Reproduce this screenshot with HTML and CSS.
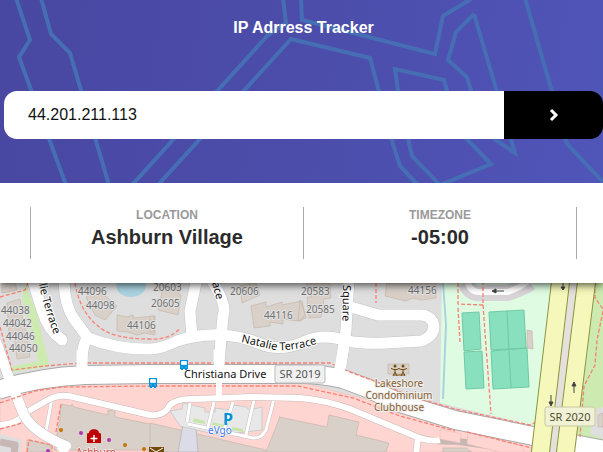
FILE: index.html
```html
<!DOCTYPE html>
<html lang="en">
<head>
<meta charset="utf-8">
<meta name="viewport" content="width=device-width, initial-scale=1">
<title>IP Adrress Tracker</title>
<link rel="stylesheet" href="styles.css">
</head>
<body>
<header class="hero">
  <svg class="hero-pattern" viewBox="0 0 603 183" preserveAspectRatio="xMidYMid slice" aria-hidden="true">
    <path d="M16-2 30 40 19 57 66 185M41-2 51 34 70 53 109 185M283-2 286 23 268 35 132 185M301-2 302 20 435 54 443 16 471-1M158 185 291 39 370 58 393 144 400 166 418 185M525-2 567 144 604 183M474 14 456 32 448 60 467 77 472 94M474 14 515 153 490 136M400 105 395 69 444 80 458 130 491 164 440 185 412 156 406 130"/>
  </svg>
  <h1 class="title">IP Adrress Tracker</h1>
  <form class="search">
    <input class="search-input" type="text" value="44.201.211.113" aria-label="IP address">
    <button class="search-button" type="button" aria-label="Search">
      <svg width="10" height="14" viewBox="0 0 10 14" aria-hidden="true"><path d="M2 2 7 7 2 12"/></svg>
    </button>
  </form>
</header>
<main class="content">
  <section class="info">
    <div class="info-edge"></div>
    <div class="info-item"><h2 class="info-label">LOCATION</h2><p class="info-value">Ashburn Village</p></div>
    <div class="info-item"><h2 class="info-label">TIMEZONE</h2><p class="info-value">-05:00</p></div>
    <div class="info-item"></div>
  </section>
  <svg class="map" viewBox="0 283 603 169" preserveAspectRatio="xMinYMin slice" role="img" aria-label="Map of Ashburn Village">
    <defs>
      <path id="natalie" d="M241 342Q258 346 275 350Q296 351 319 343"/>
      <path id="terrace" d="M39 284Q44 310 58 345"/>
      <g id="bus"><path class="bus" d="M0 0h8v9H7v1H5V9H3v1H1V9H0z"/><path class="bus-window" d="M1.500 1.500h5v3h-5zM1.500 7h1M5.500 7h1"/></g>
    </defs>
    <rect class="land" y="283" width="603" height="169"/>
    <path class="retail" d="M0 398 50 384 150 380 300 382 400 408 545 440V452H0z"/>
    <path class="residential" d="M0 434 22 440 20 452H0z"/>
    <path class="grass" d="M24 283 36 310 49 364 45 367 12 372 10 367 38 361 22 300z"/>
    <path class="park" d="M442 283H560L545 427 530 425 440 403z"/>
    <path class="stream" d="M443 283 446 325 443 399"/>
    <path class="grass" d="M590 283h13V446l-28-8z"/>
    <path class="residential" d="M593 410 603 407V439L590 434z"/>

    <g class="building">
      <path d="M2 283h13l2 7-15 3zM7 303l13-4 2 17 5 18 3 23-13 2-3-24-5-2z"/>
      <path d="M86 297l11-8 20 17-12 14-10-5zM117 315l10 2 6-2v3l22-2v19l-10-2-8 2-9-3-11-1z"/>
      <path d="M162 283h17l-1 10 3 2-3 20-20-5 4-18zM150 316h4v16h-4zM240 286l16-3 4 12-18 8z"/>
      <path d="M251 306l15-4v5l16-5v3l20-4 4 17-9 3-14-2v5l-13-2v4l-16 2zM300 300l5 14-4 7h-3zM306 283h24l1 15-7 1-3 18-12 1-2-21h5z"/>
      <path d="M387 283h49v15l-14 2-9-2-7 3-21-5zM527 330l5 1 1 18-6-1zM598 415l5-2v14h-5z"/>
      <path d="M388 364h21v10h-21zM279 417l48 10 2-12 30 7-3 13 33 8-3 9H266l14-35zM61 404l10 2 1-2 2 3 34 8v-5l7 1v6l40 8 22 8v17H54l6-31zM27 440l24 5v7H27z"/>
      <path d="M150 423l116 27v2H150zM443 448h23l6 4h-29z"/>
    </g>
    <path class="service-area" d="M183 424l13 3 2 25h-20z"/>
    <path class="parking" d="M170 411l12-2 1-6 22 5v4h10v-4l15 2 3-5 13 2 4 3 12-3v23l-44 5-38-9z"/>
    <path class="shrub" d="M194 418l11 3v3l-12-2zM213 422l11 3v3l-12-3zM233 427l10 2v3l-12-2z"/>

    <g class="court"><path d="M462 313 479 312 481 349 464 351zM464 352 482 351 484 388 466 389zM489 312 524 310 526 348 491 350zM491 351 527 348 529 387 493 389z"/><path class="court-line" d="M507 311 509 350 511 388"/></g>

    <g class="casing">
      <path d="M32 278 42 310Q48 330 62 340M64 278Q64 305 74 319L88 338Q119 350 151 349Q164 348 177 341Q198 334 220 335Q242 336 258 343Q280 353 306 341Q323 333 347 341Q363 344 386 343L422 341Q437 334 433 322Q429 315 420 315H378L351 307M88 338Q82 344 82 362M197 278 190 311 192 337M210 278Q228 305 223 316L219 362M349 278 346 330 341 365"/>
    </g>
    <path class="pale-road" d="M466 283Q470 296 485 293H508Q525 287 530 283"/>
    <path class="pale-center" d="M468 283Q471 294 485 292H508Q522 287 528 281"/>
    <g class="road">
      <path d="M32 278 42 310Q48 330 62 340M64 278Q64 305 74 319L88 338Q119 350 151 349Q164 348 177 341Q198 334 220 335Q242 336 258 343Q280 353 306 341Q323 333 347 341Q363 344 386 343L422 341Q437 334 433 322Q429 315 420 315H378L351 307M88 338Q82 344 82 362M197 278 190 311 192 337M210 278Q228 305 223 316L219 362M349 278 346 330 341 365"/>
    </g>
    <g class="lane-edge"><path d="M52 398 46 431M190 403 187 422M214 402 208 427M233 402 224 430M254 400 246 435M274 399 266 430Q261 439 253 438L188 424"/></g>
    <g class="lane"><path d="M52 398 46 431M190 403 187 422M214 402 208 427M233 402 224 430M254 400 246 435M274 399 266 430Q261 439 253 438L188 424"/></g>
    <g class="service-edge"><path d="M0 425Q16 425 27 412L46 401Q59 393 73 397L150 415Q164 417 170 405Q178 398 195 399L250 397 300 398Q325 400 350 409L417 437Q430 442 455 441L520 450M418 438 416 455M0 442 15 445 14 455"/></g>
    <g class="service"><path d="M0 425Q16 425 27 412L46 401Q59 393 73 397L150 415Q164 417 170 405Q178 398 195 399L250 397 300 398Q325 400 350 409L417 437Q430 442 440 440M418 438 416 455"/></g>
    <path class="retail" d="M440 429 461 434 460 443 440 439zM468 432 520 445 525 452H500L467 444z"/>
    <path class="main-edge" d="M-2 390Q38 377 85 375L150 374 300 374Q322 374 343 379L367 388 400 403 455 420 533 436 605 450"/>
    <path class="connector-edge" d="M-4 341 9 378 24 415Q33 432 66 446"/>
    <path class="main" d="M-2 390Q38 377 85 375L150 374 300 374Q322 374 343 379L367 388 400 403 455 420 533 436 605 450"/>
    <path class="connector" d="M-4 341 9 378 24 415Q33 432 66 446L60 452"/>

    <g class="footpath">
      <path d="M0 297 25 290 28 283M0 327 12 370 45 366 80 363 150 363 330 363 347 371 377 382 410 396 455 409 530 425Q538 423 540 412L550 340 557 283"/>
      <path d="M0 403 35 391 62 387 150 386 298 386 353 398 400 416 455 431M75 283Q80 312 98 326Q112 339 150 339Q170 340 180 328M376 283V303M458 283 458 304 483 305V283M458 308 460 342M483 305 491 414M0 429 22 423M56 432 61 404M27 452 29 440 52 445V452M595 283V298L603 309M603 311 597 340 595 365 584 386 580 437M467 432 532 448"/>
    </g>
    <path class="crossing" d="M82 350V370M219 350V370M344 345 339 374"/>
    <path class="service" d="M219 370V399"/>
    <path class="median" d="M574 278 552 456"/>
    <g class="highway-edge"><path d="M561 278 540 456M587 278 565 456"/></g>
    <g class="highway"><path d="M561 278 540 456M587 278 565 456"/></g>

    <g class="arrow"><path d="M563 283v4m-2 0h4l-2 3zM551 395v7m-2 0h4l-2 4zM574 393v-7m-2 0h4l-2-4z"/><path d="M504 291h-8m0-2v4l-4-2z"/></g>
    <ellipse class="water" cx="131" cy="285" rx="15" ry="12"/>
    <g class="house">
      <text x="1" y="314">44038</text><text x="3" y="327">44042</text><text x="6" y="340">44046</text><text x="9" y="352">44050</text>
      <text x="78" y="295">44096</text><text x="86" y="309">44098</text><text x="127" y="329">44106</text>
      <text x="153" y="291">20603</text><text x="151" y="307">20605</text><text x="230" y="295">20606</text><text x="264" y="319">44116</text>
      <text x="301" y="295">20583</text><text x="306" y="313">20585</text><text x="408" y="294">44156</text>
    </g>
    <g class="street">
      <text><textPath href="#terrace">lie Terrace</textPath></text>
      <text><textPath href="#natalie">Natalie Terrace</textPath></text>
      <text transform="translate(343 285) rotate(91)">Square</text>
      <text transform="translate(212 283) rotate(75)">ace</text>
      <text x="184" y="378">Christiana Drive</text>
    </g>
    <g class="shield"><rect x="275" y="365" width="50" height="18" rx="2"/><text x="300" y="378">SR 2019</text></g>
    <g class="shield shield-yellow"><rect x="545" y="407" width="50" height="19" rx="2"/><text x="570" y="421">SR 2020</text></g>
    <use href="#bus" x="180" y="360"/><use href="#bus" x="149" y="378"/>
    <text class="parking-sign" x="223" y="425">P</text><text class="charger" x="208" y="434">eVgo</text>
    <g class="club-icon"><circle cx="395" cy="366" r="1.500"/><circle cx="403" cy="366" r="1.500"/><path d="M391 368.500l3 1h3l2-1 2 1h3l3-1M395 369v3l-2 4M395 372l2 4M403 369v3l-2 4M403 372l2 4M393 375h12"/></g>
    <g class="club"><text x="399" y="387">Lakeshore</text><text x="399" y="399">Condominium</text><text x="399" y="411">Clubhouse</text></g>
    <path class="clinic" d="M87 434q0-1 2-1c0-5 10-5 10 0q2 0 2 1v9H87z"/><path class="clinic-mark" d="M94 435v7M90.500 438.500h7"/>
    <text class="clinic-label" x="76" y="456">Ashburn</text>
    <g class="dot-orange"><circle cx="61" cy="430" r="2"/><circle cx="125" cy="445" r="2"/><circle cx="144" cy="449" r="2"/></g>
    <g class="dot-purple"><circle cx="81" cy="433" r="2"/><circle cx="109" cy="440" r="2"/><circle cx="48" cy="451" r="2"/></g>
    <path class="mail" d="M149 447h15v6h-15z"/><path class="mail-line" d="M150 448l6 4 7-4"/>
  </svg>
</main>
</body>
</html>
```
FILE: styles.css
```css
* { box-sizing: border-box; }

body {
  display: flex;
  flex-direction: column;
  min-height: 100vh;
  margin: 0;
  overflow: hidden;
  font-family: "Liberation Sans", Arial, sans-serif;
}

/* Header */
.hero {
  position: relative;
  z-index: 2;
  padding: 16px 0 44px 4px;
  background: linear-gradient(100deg, #4848a2, #4c4daa 50%, #5055b8);
}
.hero-pattern {
  position: absolute;
  inset: 0;
  width: 100%;
  height: 100%;
  fill: none;
  stroke: #466eb5;
  stroke-width: 4;
}
.title {
  position: relative;
  margin: 0 0 52px;
  color: #fff;
  font-size: 16px;
  line-height: 23px;
  text-align: center;
}
.search {
  position: relative;
  display: flex;
  height: 48px;
  overflow: hidden;
  border-radius: 13px;
}
.search-input {
  flex: 1;
  min-width: 0;
  padding: 0 24px;
  border: 0;
  background: #fff;
  color: #111;
  font: 16px "Liberation Sans", Arial, sans-serif;
}
.search-button {
  display: flex;
  align-items: center;
  justify-content: center;
  width: 99px;
  padding: 0;
  border: 0;
  background: #000;
}
.search-button path { fill: none; stroke: #fff; stroke-width: 3; }

/* Details */
.content { display: flex; flex: 1; flex-direction: column; }
.info {
  position: relative;
  display: grid;
  grid-template-columns: 30px 1fr 1fr 27px;
  padding: 24px 0;
  background: #fff;
  box-shadow: 0 2px 8px rgba(0, 0, 0, 0.7);
}
.info-item { height: 52px; border-left: 1px solid #aaa; text-align: center; }
.info-label { margin: 0; color: #999; font-size: 12px; line-height: 16px; }
.info-value { margin: 0; color: #2b2b2b; font-size: 20px; font-weight: 700; line-height: 28px; }

/* Map */
.map { display: block; flex: 1; width: 100%; min-height: 169px; font-family: "Noto Sans", sans-serif; }
.map path { stroke-linejoin: round; }
.land, .residential { fill: #dedede; }
.retail { fill: #ffd5d1; stroke: #e9b9b5; stroke-width: 0.5; }
.grass { fill: #cdebb0; }
.park { fill: #dffce2; }
.water { fill: #aad3df; }
.stream { fill: none; stroke: #aad3df; stroke-width: 2; }
.building path { fill: #d9d0c9; stroke: #c4b7aa; stroke-width: 0.7; }
.service-area { fill: #dcdce8; stroke: #bbb; stroke-width: 1; }
.parking { fill: #e8e8e8; stroke: #ccc; stroke-width: 1; }
.shrub { fill: #c8e6ac; }
.court path { fill: #88e0be; stroke: #70c9a5; stroke-width: 1; }
.court .court-line { fill: none; }
.casing, .road, .lane-edge, .lane, .service-edge, .service, .main-edge, .main, .crossing,
.connector-edge, .connector, .footpath, .median, .highway-edge, .highway, .pale-road, .pale-center { fill: none; }
.casing, .road { stroke-linecap: round; }
.casing { stroke: #c4c4c4; stroke-width: 12; }
.road, .crossing { stroke: #fff; stroke-width: 11; }
.pale-road { stroke: #d8d4d8; stroke-width: 16; }
.pale-center { stroke: #fff; stroke-width: 6; }
.lane-edge { stroke: #c4c4c4; stroke-width: 4; }
.lane { stroke: #fff; stroke-width: 3; }
.service-edge { stroke: #c8b8b5; stroke-width: 7; }
.service { stroke: #fff; stroke-width: 6; }
.main-edge { stroke: #a8a8a8; stroke-width: 20; }
.main { stroke: #fff; stroke-width: 18; }
.connector-edge { stroke: #bbb; stroke-width: 11; }
.connector { stroke: #fff; stroke-width: 10; }
.footpath { stroke: #fa8072; stroke-width: 1.3; stroke-dasharray: 4 2; }
.median { stroke: #e4e0dc; stroke-width: 7; }
.highway-edge { stroke: #8c9440; stroke-width: 19; }
.highway { stroke: #f5f8ba; stroke-width: 17; }
.arrow { fill: #444; stroke: #444; stroke-width: 1; }
.house { fill: #707070; stroke: #e2e2e2; stroke-width: 2; paint-order: stroke; font-size: 10px; }
.street { fill: #111; stroke: #fff; stroke-width: 2; paint-order: stroke; font-size: 11px; }
.shield rect { fill: #f0f0f0; stroke: #bbb; }
.shield text { fill: #555; font-size: 11px; text-anchor: middle; }
.shield-yellow rect { fill: #f1f1d5; stroke: #c9c9a0; }
.shield-yellow text { fill: #4c4f2e; }
.bus { fill: #0092da; }
.bus-window { fill: #fff; stroke: #fff; stroke-width: 0.7; }
.parking-sign { fill: #0092da; font-size: 16px; font-weight: 700; }
.charger { fill: #3975f0; stroke: #fff; stroke-width: 1; paint-order: stroke; font-size: 10px; }
.club { fill: #85602c; stroke: #eee; stroke-width: 2; paint-order: stroke; font-size: 10px; text-anchor: middle; }
.club-icon { fill: #734a08; }
.club-icon path { fill: none; stroke: #734a08; stroke-width: 1; }
.clinic { fill: #bf0000; }
.clinic-mark { stroke: #fff; stroke-width: 1.5; }
.clinic-label { fill: #c4473f; stroke: #fff; stroke-width: 1; paint-order: stroke; font-size: 10px; }
.dot-orange { fill: #c77400; }
.dot-purple { fill: #ac39ac; }
.mail { fill: #734a08; }
.mail-line { fill: none; stroke: #fff; stroke-width: 1; }
```
